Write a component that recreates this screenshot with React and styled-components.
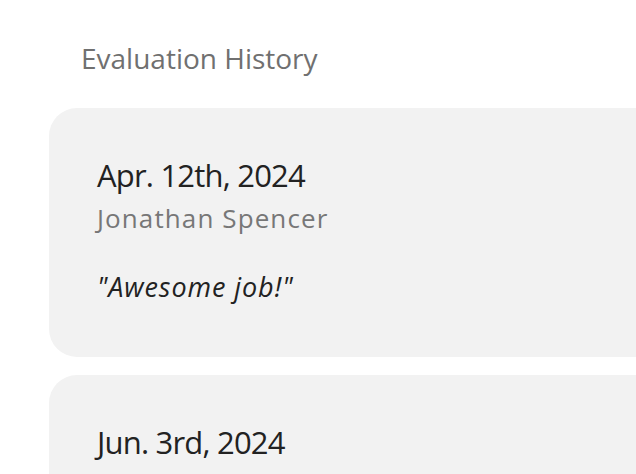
import React from "react";
import styled, { createGlobalStyle } from "styled-components";

const Global = createGlobalStyle`
  html, body { margin: 0; padding: 0; background: #ffffff; }
  body { font-family: "Open Sans", "Lato", sans-serif; overflow: hidden; }
`;

const Page = styled.div`
  padding: 39px 0 0 49px;
  width: 700px;
`;

const Title = styled.h2`
  margin: 0 0 31px 32px;
  font-weight: 400;
  font-size: 28px;
  line-height: 38px;
  color: #707070;
`;

const List = styled.div`
  display: flex;
  flex-direction: column;
  gap: 18px;
`;

const Card = styled.div`
  background: #f2f2f2;
  border-radius: 28px;
  padding: 47px 48px 53px;
`;

const DateText = styled.div`
  font-size: 31px;
  line-height: 40px;
  letter-spacing: -0.8px;
  color: #222222;
`;

const Name = styled.div`
  margin-top: 5px;
  font-size: 26px;
  line-height: 36px;
  letter-spacing: 1.1px;
  color: #777777;
`;

const Quote = styled.div`
  margin-top: 34px;
  font-size: 27px;
  line-height: 34px;
  letter-spacing: 0.9px;
  font-style: italic;
  color: #222222;
`;

const entries = [
  { date: "Apr. 12th, 2024", name: "Jonathan Spencer", quote: "\"Awesome job!\"" },
  { date: "Jun. 3rd, 2024", name: "Jonathan Spencer", quote: "\"Great work!\"" },
];

export default function App() {
  return (
    <>
      <Global />
      <Page>
        <Title>Evaluation History</Title>
        <List>
          {entries.map((e) => (
            <Card key={e.date}>
              <DateText>{e.date}</DateText>
              <Name>{e.name}</Name>
              <Quote>{e.quote}</Quote>
            </Card>
          ))}
        </List>
      </Page>
    </>
  );
}
